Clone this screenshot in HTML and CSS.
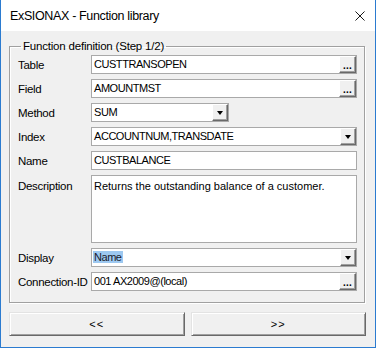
FILE: index.html
```html
<!DOCTYPE html>
<html>
<head>
<meta charset="utf-8">
<link rel="stylesheet" href="styles.css">
</head>
<body>
<div class="window">
  <div class="titlebar">
    <span class="title">ExSIONAX - Function library</span>
    <svg class="close" width="11" height="11" viewBox="0 0 11 11"><path d="M0.5 0.5 L10.5 10.5 M10.5 0.5 L0.5 10.5" stroke="#000" stroke-width="1" fill="none"/></svg>
  </div>
  <div class="content">
    <fieldset class="group">
      <legend class="legend">Function definition (Step 1/2)</legend>
      <div class="form">
        <div class="label">Table</div>
        <div class="field"><span class="val">CUSTTRANSOPEN</span><span class="btn3d dots">...</span></div>

        <div class="label">Field</div>
        <div class="field"><span class="val">AMOUNTMST</span><span class="btn3d dots">...</span></div>

        <div class="label">Method</div>
        <div class="field short"><span class="val">SUM</span><span class="btn3d arrow"><i class="tri"></i></span></div>

        <div class="label">Index</div>
        <div class="field"><span class="val">ACCOUNTNUM,TRANSDATE</span><span class="btn3d arrow"><i class="tri"></i></span></div>

        <div class="label">Name</div>
        <div class="field"><span class="val">CUSTBALANCE</span></div>

        <div class="label top">Description</div>
        <div class="field area"><span class="val">Returns the outstanding balance of a customer.</span></div>

        <div class="label">Display</div>
        <div class="field"><span class="val"><span class="sel">Name</span></span><span class="btn3d arrow"><i class="tri"></i></span></div>

        <div class="label">Connection-ID</div>
        <div class="field"><span class="val">001 AX2009@(local)</span><span class="btn3d dots">...</span></div>
      </div>
    </fieldset>
    <div class="buttons">
      <div class="pbtn">&lt;&lt;</div>
      <div class="pbtn">&gt;&gt;</div>
    </div>
  </div>
</div>
</body>
</html>
```
FILE: styles.css
```css
html, body {
  margin: 0;
  padding: 0;
  background: #f0f0f0;
}
.window {
  width: 376px;
  height: 348px;
  box-sizing: border-box;
  border: 1px solid #2b7bd0;
  border-top: none;
  display: flex;
  flex-direction: column;
  font-family: "Liberation Sans", Arial, sans-serif;
  color: #000;
}
.titlebar {
  height: 31px;
  flex: none;
  background: #fff;
  display: flex;
  align-items: center;
  justify-content: space-between;
  padding: 0 10px 0 9px;
}
.title {
  font-size: 12.5px;
  letter-spacing: -0.35px;
  padding-top: 1px;
}
.close {
  display: block;
  margin-top: 1px;
  width: 10px;
  height: 10px;
}
.content {
  flex: 1;
  background: #f0f0f0;
  padding: 8px 0 0 8px;
}
.group {
  margin: 0;
  width: 356px;
  box-sizing: border-box;
  border: 1px solid #a0a0a0;
  box-shadow: 1px 1px 0 #fff, inset 1px 1px 0 #fff;
  padding: 2px 7px 11px 8px;
}
.legend {
  font-size: 11.5px;
  line-height: 14px;
  padding: 0 2px;
  margin-left: 3px;
  letter-spacing: -0.2px;
}
.form {
  display: grid;
  grid-template-columns: 73px 266px;
  grid-template-rows: repeat(5, 19px) 68px 19px 19px;
  row-gap: 5px;
}
.label {
  font-size: 11.5px;
  line-height: 19px;
  letter-spacing: -0.3px;
  white-space: nowrap;
  padding-top: 1px;
}
.label.top {
  padding-top: 2px;
}
.field {
  box-sizing: border-box;
  border: 1px solid #a9a9a9;
  background: #fff;
  display: flex;
  align-items: stretch;
  font-size: 11px;
}
.field.short {
  width: 138px;
}
.val {
  flex: 1;
  padding-left: 2px;
  line-height: 17px;
  white-space: nowrap;
  overflow: hidden;
  letter-spacing: -0.45px;
}
.field.area .val {
  white-space: normal;
  line-height: 13px;
  padding-top: 4px;
  letter-spacing: 0;
}
.sel {
  background: #9dc8f0;
  padding: 0 1px;
  margin-left: -1px;
  color: #1a1a2a;
}
.btn3d {
  width: 17px;
  flex: none;
  box-sizing: border-box;
  background: #f0f0f0;
  border-style: solid;
  border-width: 1px;
  border-color: #fff #696969 #696969 #fff;
  box-shadow: inset -1px -1px 0 #a0a0a0;
  display: flex;
  justify-content: center;
}
.btn3d.dots {
  align-items: flex-end;
  font-weight: bold;
  font-size: 10px;
  line-height: 10px;
  padding-bottom: 1px;
  letter-spacing: 0.3px;
}
.btn3d.arrow {
  width: 16px;
  align-items: center;
}
.tri {
  display: block;
  width: 0;
  height: 0;
  border-left: 3.5px solid transparent;
  border-right: 3.5px solid transparent;
  border-top: 4px solid #000;
  margin-top: 1px;
}
.buttons {
  display: flex;
  gap: 6px;
  margin-top: 9px;
  width: 357px;
}
.pbtn {
  flex: 1;
  height: 24px;
  box-sizing: border-box;
  border-style: solid;
  border-width: 1px;
  border-color: #e3e3e3 #696969 #696969 #e3e3e3;
  box-shadow: inset 1px 1px 0 #fff, inset -1px -1px 0 #a0a0a0;
  background: #f0f0f0;
  font-size: 11px;
  line-height: 22px;
  text-align: center;
  letter-spacing: 1px;
}
```
